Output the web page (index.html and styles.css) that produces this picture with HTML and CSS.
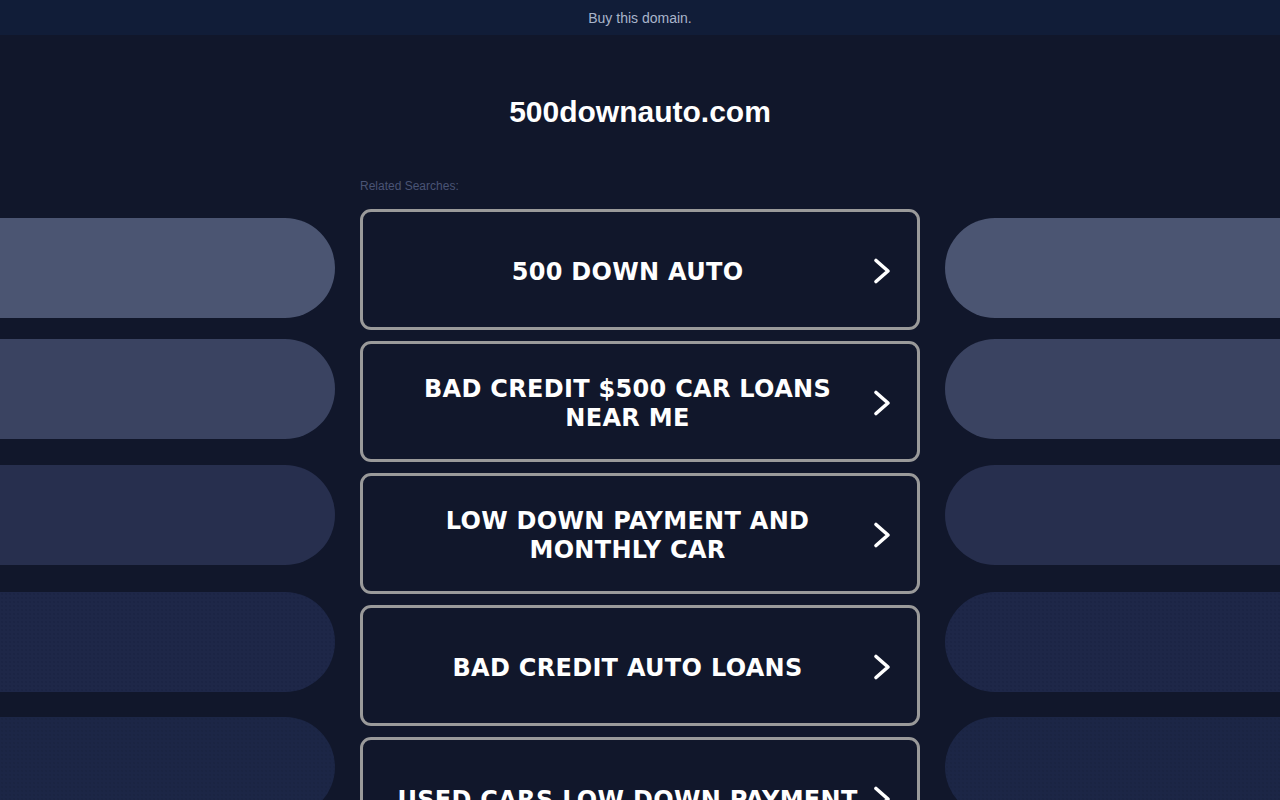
FILE: index.html
```html
<!DOCTYPE html>
<html lang="en">
<head>
<meta charset="utf-8">
<title>500downauto.com</title>
<link rel="stylesheet" href="styles.css">
</head>
<body>
<div class="topbar">Buy this domain.</div>
<div class="stage">
  <div class="side side-left">
    <div class="pill p1"></div>
    <div class="pill p2"></div>
    <div class="pill p3"></div>
    <div class="pill p4 dotted"></div>
    <div class="pill p5 dotted"></div>
  </div>
  <main class="center">
    <h1 class="domain">500downauto.com</h1>
    <div class="related">Related Searches:</div>
    <div class="cards">
      <a class="card" href="#"><span class="label">500 DOWN AUTO</span><svg class="chev" viewBox="0 0 20 28" width="20" height="28"><path d="M4 3.5 L16 14 L4 24.5" fill="none" stroke="#fff" stroke-width="3.6" stroke-linecap="round" stroke-linejoin="round"/></svg></a>
      <a class="card" href="#"><span class="label">BAD CREDIT $500 CAR LOANS NEAR ME</span><svg class="chev" viewBox="0 0 20 28" width="20" height="28"><path d="M4 3.5 L16 14 L4 24.5" fill="none" stroke="#fff" stroke-width="3.6" stroke-linecap="round" stroke-linejoin="round"/></svg></a>
      <a class="card" href="#"><span class="label">LOW DOWN PAYMENT AND MONTHLY CAR</span><svg class="chev" viewBox="0 0 20 28" width="20" height="28"><path d="M4 3.5 L16 14 L4 24.5" fill="none" stroke="#fff" stroke-width="3.6" stroke-linecap="round" stroke-linejoin="round"/></svg></a>
      <a class="card" href="#"><span class="label">BAD CREDIT AUTO LOANS</span><svg class="chev" viewBox="0 0 20 28" width="20" height="28"><path d="M4 3.5 L16 14 L4 24.5" fill="none" stroke="#fff" stroke-width="3.6" stroke-linecap="round" stroke-linejoin="round"/></svg></a>
      <a class="card" href="#"><span class="label">USED CARS LOW DOWN PAYMENT</span><svg class="chev" viewBox="0 0 20 28" width="20" height="28"><path d="M4 3.5 L16 14 L4 24.5" fill="none" stroke="#fff" stroke-width="3.6" stroke-linecap="round" stroke-linejoin="round"/></svg></a>
    </div>
  </main>
  <div class="side side-right">
    <div class="pill p1"></div>
    <div class="pill p2"></div>
    <div class="pill p3"></div>
    <div class="pill p4 dotted"></div>
    <div class="pill p5 dotted"></div>
  </div>
</div>
</body>
</html>
```

FILE: styles.css
```css
html, body {
  margin: 0;
  padding: 0;
  height: 100%;
  overflow: hidden;
}
body {
  background: #11172b;
  font-family: "Liberation Sans", Arial, sans-serif;
}
.topbar {
  height: 35px;
  line-height: 36px;
  background: #111d38;
  color: #a9b5cb;
  font-size: 14px;
  text-align: center;
}
.stage {
  display: grid;
  grid-template-columns: 335px 560px 335px;
  column-gap: 25px;
}
.side {
  display: flex;
  flex-direction: column;
  padding-top: 183px;
}
.pill {
  height: 100px;
  flex: none;
}
.side-left .pill { border-radius: 0 50px 50px 0; }
.side-right .pill { border-radius: 50px 0 0 50px; }
.p2 { margin-top: 21px; }
.p3 { margin-top: 26px; }
.p4 { margin-top: 27px; }
.p5 { margin-top: 25px; }
.p1 { background-color: #4b5572; }
.p2 { background-color: #3a4361; }
.p3 { background-color: #272f4e; }
.p4 { background-color: #1e2748; }
.p5 { background-color: #1c2646; }
.dotted {
  background-image: radial-gradient(circle, rgba(20, 28, 56, 0.35) 0.6px, transparent 0.9px);
  background-size: 4px 4px;
}
.center {
  display: flex;
  flex-direction: column;
}
.domain {
  margin: 59px 0 0;
  font-size: 30px;
  line-height: 36px;
  font-weight: bold;
  color: #ffffff;
  text-align: center;
}
.related {
  margin-top: 49px;
  font-size: 12px;
  line-height: 14px;
  color: #4a5475;
}
.cards {
  margin-top: 16px;
  display: flex;
  flex-direction: column;
  gap: 11px;
}
.card {
  box-sizing: border-box;
  height: 121px;
  border: 3px solid #9a9a9a;
  border-radius: 11px;
  display: flex;
  align-items: center;
  padding: 0 25px 0 20px;
  text-decoration: none;
  color: #ffffff;
}
.label {
  flex: 1;
  text-align: center;
  font-family: "DejaVu Sans", Verdana, sans-serif;
  font-weight: bold;
  font-size: 24px;
  line-height: 29px;
  letter-spacing: 0.3px;
  padding-top: 5px;
}
.chev {
  flex: none;
  display: block;
  margin-top: 2px;
}
```
